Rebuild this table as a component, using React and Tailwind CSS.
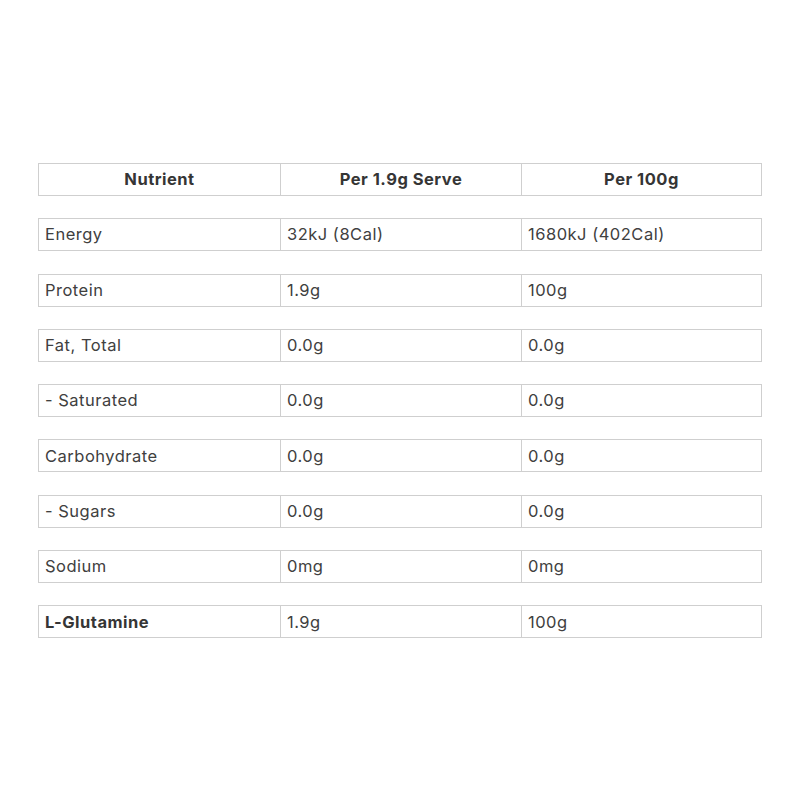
const rows = [
  ["Energy", "32kJ (8Cal)", "1680kJ (402Cal)"],
  ["Protein", "1.9g", "100g"],
  ["Fat, Total", "0.0g", "0.0g"],
  ["- Saturated", "0.0g", "0.0g"],
  ["Carbohydrate", "0.0g", "0.0g"],
  ["- Sugars", "0.0g", "0.0g"],
  ["Sodium", "0mg", "0mg"],
  ["L-Glutamine", "1.9g", "100g", true],
];

function Row({ cells, header, bold }) {
  return (
    <div className="grid grid-cols-[241px_241px_240px] h-[33px] border border-[#cfcfcf]">
      {cells.map((c, i) => (
        <div
          key={i}
          className={
            "flex items-center px-[6px] " +
            (i > 0 ? "border-l border-[#cfcfcf] " : "") +
            (header ? "justify-center font-bold text-[#353535]" : "") +
            (bold && i === 0 ? "font-bold text-[#353535]" : "")
          }
        >
          {c}
        </div>
      ))}
    </div>
  );
}

export default function App() {
  return (
    <div
      className="w-[800px] h-[800px] bg-white pt-[163px] pl-[38px] text-[16.5px] tracking-[0.5px] text-[#404040]"
      style={{ fontFamily: "Inter, 'Noto Sans', sans-serif" }}
    >
      <div className="flex flex-col gap-[22.3px] w-[724px]">
        <Row cells={["Nutrient", "Per 1.9g Serve", "Per 100g"]} header />
        {rows.map((r) => (
          <Row key={r[0]} cells={r.slice(0, 3)} bold={r[3]} />
        ))}
      </div>
    </div>
  );
}
